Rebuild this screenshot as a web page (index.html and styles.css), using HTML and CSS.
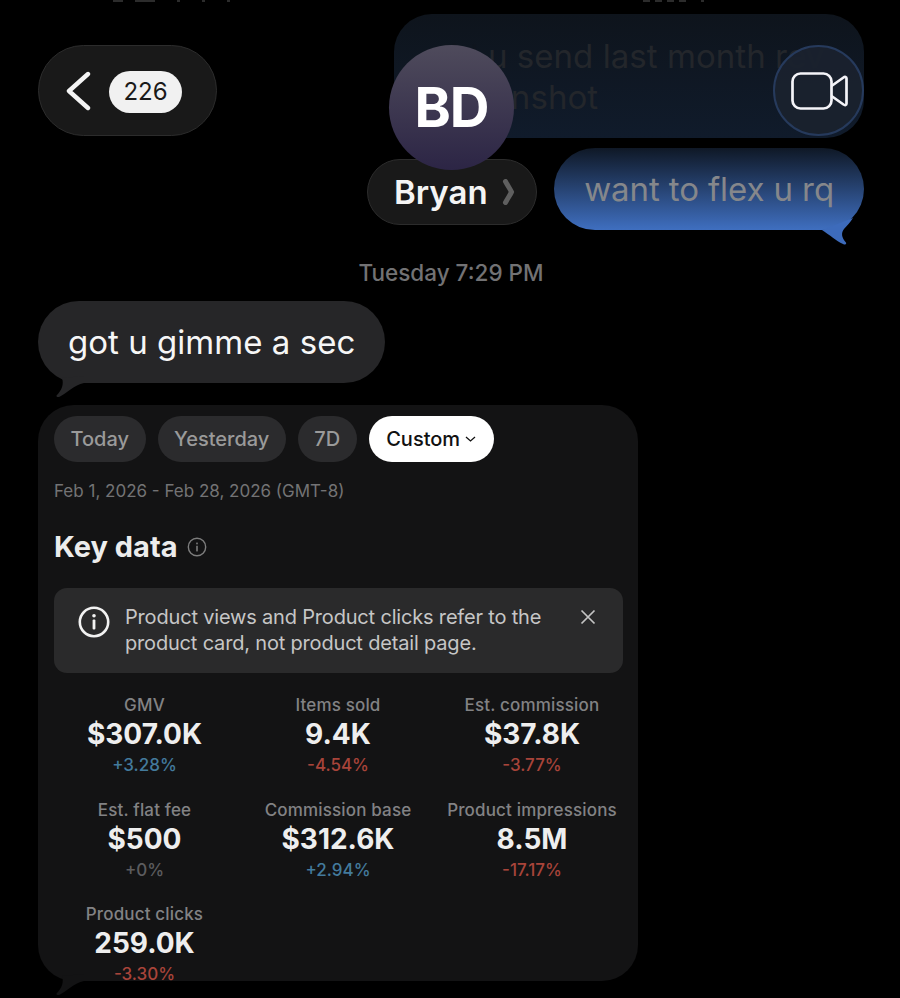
FILE: index.html
```html
<!DOCTYPE html>
<html lang="en">
<head>
<meta charset="utf-8">
<title>Messages</title>
<link rel="stylesheet" href="styles.css">
</head>
<body>
<main class="screen">
  <section class="thread">
    <div class="sent-group">
      <div class="bubble sent faded"><span class="faded-word">did</span> u send last month rev screenshot</div>
      <div class="bubble sent bright">
        want to flex u rq
        <svg class="tail tail-right" width="44" height="31" viewBox="0 0 44 31"><path d="M2 15C10 20 16 26 23 29C26 30.500 27 28.500 25.500 27C21.500 22 21 18 24 14C27 10.500 30 8 33 3Z" fill="#3d6bbb"/></svg>
      </div>
    </div>
    <p class="stamp">Tuesday 7:29 PM</p>
    <div class="bubble received">
      got u gimme a sec
      <svg class="tail tail-left" width="36" height="22" viewBox="0 0 36 22"><path d="M12 2C14 8 12 14 6.500 19.500C6 21 8 21.500 10 20.500C17 17 24 9 34 7V0Z" fill="#262628"/></svg>
    </div>
    <article class="card">
      <svg class="tail tail-left" width="36" height="22" viewBox="0 0 36 22"><path d="M12 2C14 8 12 14 6.500 19.500C6 21 8 21.500 10 20.500C17 17 24 9 34 7V0Z" fill="#131314"/></svg>
      <div class="chips">
        <span class="chip">Today</span>
        <span class="chip">Yesterday</span>
        <span class="chip">7D</span>
        <span class="chip active">Custom
          <svg width="11" height="6" viewBox="0 0 11 6"><path d="M1 1L5.500 5L10 1" fill="none" stroke="#111" stroke-width="1.300"/></svg>
        </span>
      </div>
      <p class="range">Feb 1, 2026 - Feb 28, 2026 (GMT-8)</p>
      <h2 class="title">Key data
        <svg width="20" height="20" viewBox="0 0 20 20"><circle cx="10" cy="10" r="8.700" fill="none" stroke="#7d7d7d" stroke-width="1.400"/><rect x="9.200" y="8.800" width="1.600" height="5.600" fill="#7d7d7d"/><rect x="9.200" y="5.600" width="1.600" height="1.700" fill="#7d7d7d"/></svg>
      </h2>
      <div class="notice">
        <svg class="notice-icon" width="32" height="32" viewBox="0 0 32 32"><circle cx="16" cy="16" r="14.200" fill="none" stroke="#f2f2f2" stroke-width="2.600"/><rect x="14.600" y="13.500" width="2.800" height="10" rx="1" fill="#f2f2f2"/><circle cx="16" cy="9.800" r="1.800" fill="#f2f2f2"/></svg>
        <p class="notice-text">Product views and Product clicks refer to the product card, not product detail page.</p>
        <svg class="notice-close" width="18" height="18" viewBox="0 0 18 18"><path d="M2.500 2.500L15.500 15.500M15.500 2.500L2.500 15.500" stroke="#c4c4c4" stroke-width="1.700" fill="none"/></svg>
      </div>
      <div class="metrics">
        <div class="metric"><span class="label">GMV</span><strong class="value">$307.0K</strong><span class="delta up">+3.28%</span></div>
        <div class="metric"><span class="label">Items sold</span><strong class="value">9.4K</strong><span class="delta down">-4.54%</span></div>
        <div class="metric"><span class="label">Est. commission</span><strong class="value">$37.8K</strong><span class="delta down">-3.77%</span></div>
        <div class="metric"><span class="label">Est. flat fee</span><strong class="value">$500</strong><span class="delta flat">+0%</span></div>
        <div class="metric"><span class="label">Commission base</span><strong class="value">$312.6K</strong><span class="delta up">+2.94%</span></div>
        <div class="metric"><span class="label">Product impressions</span><strong class="value">8.5M</strong><span class="delta down">-17.17%</span></div>
        <div class="metric"><span class="label">Product clicks</span><strong class="value">259.0K</strong><span class="delta down">-3.30%</span></div>
      </div>
    </article>
  </section>

  <div class="status status-left"><i class="w10"></i><i class="w20"></i><i class="w3"></i><i class="w3"></i><i class="w3"></i></div>
  <div class="status status-right"><i class="w7"></i><i class="w7"></i><i class="w7"></i><i class="w7"></i><i class="w3"></i></div>

  <div class="back-pill">
    <svg width="26" height="40" viewBox="0 0 26 40"><path d="M23 3L4 20L23 37" fill="none" stroke="#f4f4f4" stroke-width="4.400" stroke-linecap="round" stroke-linejoin="round"/></svg>
    <span class="count">226</span>
  </div>
  <div class="avatar">BD</div>
  <div class="name-pill">Bryan
    <svg width="13" height="26" viewBox="0 0 13 26"><path d="M3.500 2.500C6.500 8 8.500 10.500 9.500 13C8.500 15.500 6.500 18 3.500 23.500" fill="none" stroke="#5f5f5f" stroke-width="5" stroke-linecap="round"/></svg>
  </div>
  <div class="video">
    <svg width="58" height="38" viewBox="0 0 58 38"><rect x="1.500" y="1.500" width="39" height="35" rx="8" fill="none" stroke="#f4f4f8" stroke-width="2.700"/><path d="M40.500 14L52.500 5.500C54 4.500 55.500 5 55.500 6.500V31.500C55.500 33 54 33.500 52.500 32.500L40.500 24" fill="none" stroke="#f4f4f8" stroke-width="2.700" stroke-linejoin="round"/></svg>
  </div>
</main>
</body>
</html>
```
FILE: styles.css
```css
* { box-sizing: border-box; }
html, body { margin: 0; background: #000; }
body { font-family: Inter, "Liberation Sans", sans-serif; }
.screen { position: relative; width: 900px; height: 998px; overflow: hidden; background: #000; }
.thread { display: flex; flex-direction: column; padding: 14px 36px 0 38px; }
.sent-group { display: flex; flex-direction: column; align-items: flex-end; gap: 10px; }
.bubble { position: relative; font-size: 33px; border-radius: 41px; }
.sent.faded { width: 470px; height: 124px; padding: 22px 28px 0 30px; text-indent: 6px; line-height: 41px; letter-spacing: 0.05px; color: #23262b; background: linear-gradient(#0e141c, #101b2b); border-radius: 38px; }
.faded-word { color: #0f151e; }
.sent.bright { height: 82px; padding: 0 30px; line-height: 82px; letter-spacing: -0.1px; color: #85878b; background: linear-gradient(#0f1826, #3f6fc0); }
.tail { position: absolute; }
.tail-right { right: 0; bottom: -16px; }
.tail-left { left: 12px; bottom: -15px; }
.stamp { margin: 29px 0 0; text-align: center; font-size: 22.5px; line-height: 27px; font-weight: 500; color: #727274; width: 826px; }
.received { align-self: flex-start; height: 82px; margin-top: 15px; padding: 0 30px; line-height: 82px; letter-spacing: 0.03px; color: #f6f6f6; background: #262628; }
.card { position: relative; width: 600px; height: 576px; margin-top: 22px; padding: 11px 15px 0 16px; background: #131314; border-radius: 36px; }
.chips { display: flex; gap: 12px; }
.chip { display: flex; align-items: center; gap: 5px; height: 46px; padding: 0 16.500px; border-radius: 23px; font-size: 20px; font-weight: 500; background: #2b2b2d; color: #9a9a9a; }
.chip.active { padding: 0 17.500px; background: #fff; color: #111; }
.range { margin: 18px 0 0; font-size: 17px; line-height: 22px; color: #737375; }
.title { display: flex; align-items: center; gap: 9px; margin: 28px 0 0; font-size: 29px; line-height: 34px; font-weight: 700; color: #ececec; }
.notice { display: flex; align-items: flex-start; margin-top: 24px; height: 85px; padding: 16px 24px 0 24px; border-radius: 13px; background: #2a2a2b; }
.notice-icon { flex: none; margin-top: 2px; margin-right: 15px; }
.notice-text { flex: 1; margin: 0; font-size: 20px; line-height: 26px; letter-spacing: -0.18px; color: #c6c6c6; }
.notice-close { flex: none; margin: 4px 2px 0 14px; }
.metrics { display: grid; grid-template-columns: 181px 206px 182px; margin-top: 22px; row-gap: 10.500px; }
.metric { display: flex; flex-direction: column; align-items: center; height: 94px; }
.label { font-size: 17px; line-height: 20px; font-weight: 500; letter-spacing: 0.16px; color: #828284; white-space: nowrap; }
.value { margin-top: 1px; font-size: 28px; line-height: 36px; font-weight: 700; color: #eee; }
.delta { margin-top: 2px; font-size: 17px; line-height: 22px; font-weight: 500; }
.up { color: #437a9c; }
.down { color: #a8443a; }
.flat { color: #5c5c5e; }
.status { position: absolute; top: 0; display: flex; gap: 12px; }
.status i { display: block; height: 2px; background: #2c2c2c; }
.status .w3 { width: 3px; margin-left: 10px; }
.status .w7 { width: 7px; margin-right: -7px; }
.status .w10 { width: 10px; }
.status .w20 { width: 20px; }
.status-left { left: 113px; }
.status-right { left: 643px; }
.back-pill { position: absolute; left: 38px; top: 45px; width: 179px; height: 91px; display: flex; align-items: center; gap: 18px; padding-left: 26px; border-radius: 46px; background: #191919; border: 1px solid #2c2c2c; }
.count { width: 73px; height: 42px; margin-top: 2px; border-radius: 21px; background: #f1f1f1; color: #1a1a1a; font-size: 24px; line-height: 42px; text-align: center; }
.avatar { position: absolute; left: 389px; top: 45px; width: 125px; height: 125px; border-radius: 50%; background: linear-gradient(#4f4b5c, #2c2545); color: #fff; font-size: 55px; font-weight: 700; letter-spacing: -1px; line-height: 125px; text-align: center; z-index: 2; }
.name-pill { position: absolute; left: 367px; top: 159px; width: 170px; height: 66px; display: flex; align-items: center; gap: 10px; padding-left: 26px; border-radius: 33px; background: #191919; border: 1px solid #2c2c2c; color: #f4f4f4; font-size: 33px; font-weight: 600; }
.name-pill svg { margin-left: 4px; }
.video { position: absolute; left: 773px; top: 45px; width: 91px; height: 91px; display: flex; align-items: center; justify-content: center; padding-left: 3px; border-radius: 50%; background: rgba(26,33,46,.96); border: 2px solid #263a5c; }
```
